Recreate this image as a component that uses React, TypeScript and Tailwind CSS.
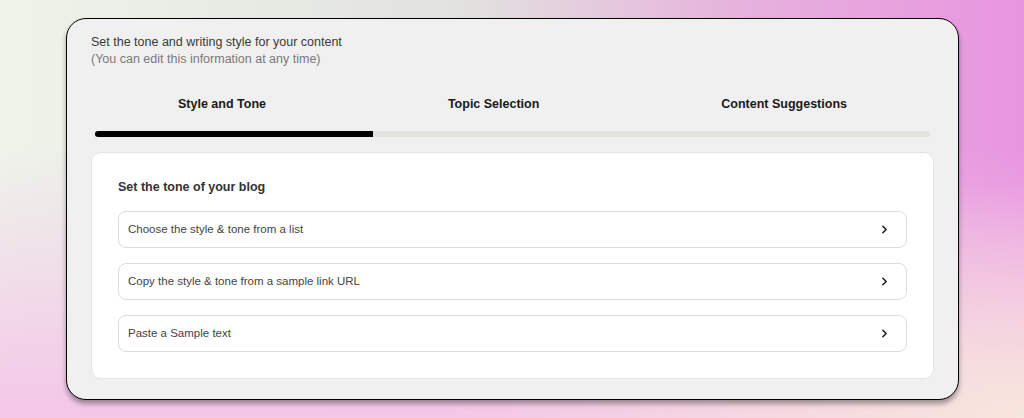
import { ChevronRight } from 'lucide-react';

const tabs = ['Style and Tone', 'Topic Selection', 'Content Suggestions'];

const options = [
  'Choose the style & tone from a list',
  'Copy the style & tone from a sample link URL',
  'Paste a Sample text',
];

export default function App() {
  return (
    <div
      className="h-[418px] w-[1024px] overflow-hidden pl-[66px] pt-[18px] font-['Liberation_Sans',Arial,sans-serif] bg-[radial-gradient(ellipse_at_100%_100%,#f7e6dc_0%,rgba(247,230,220,0)_40%),linear-gradient(180deg,rgba(243,196,230,0)_35%,#f4c6e8_100%),linear-gradient(90deg,#eef4ea_0%,#e2e2df_45%,#e6b2dc_72%,#e895e0_100%)]"
    >
      <div className="flex h-[382px] w-[893px] flex-col rounded-[20px] border border-black bg-[#f0f0f0] px-6 pt-[15px] pb-5 shadow-[0_4px_5px_rgba(0,0,0,0.35)]">
        {/* Intro */}
        <div className="text-[12.5px] leading-[17px]">
          <p className="text-[#3a3a3a]">Set the tone and writing style for your content</p>
          <p className="text-[#7a7a7a]">(You can edit this information at any time)</p>
        </div>

        {/* Steps */}
        <div className="mt-[28px] flex justify-between px-[87px] text-[12.5px] font-bold leading-[17px] text-[#1a1a1a]">
          {tabs.map((tab) => (
            <span key={tab}>{tab}</span>
          ))}
        </div>
        <div className="mx-1 mt-[18px] h-[6px] rounded-full bg-[#e2e2de]">
          <div className="h-full w-1/3 rounded-l-full bg-black" />
        </div>

        {/* Tone options */}
        <div className="mt-[15px] flex-1 rounded-[10px] border border-[#e4e4e4] bg-white px-[26px] pt-[26px]">
          <h2 className="text-[12.5px] font-bold leading-[17px] text-[#333]">Set the tone of your blog</h2>
          <div className="mt-[15px] flex flex-col gap-[15px]">
            {options.map((label) => (
              <button
                key={label}
                type="button"
                className="flex h-[37px] items-center justify-between rounded-[8px] border border-[#dcdcdc] bg-white pl-[9px] pr-[15px] text-left text-[11.5px] text-[#444]"
              >
                <span>{label}</span>
                <ChevronRight className="h-[13px] w-[13px] text-[#222]" strokeWidth={3} />
              </button>
            ))}
          </div>
        </div>
      </div>
    </div>
  );
}
